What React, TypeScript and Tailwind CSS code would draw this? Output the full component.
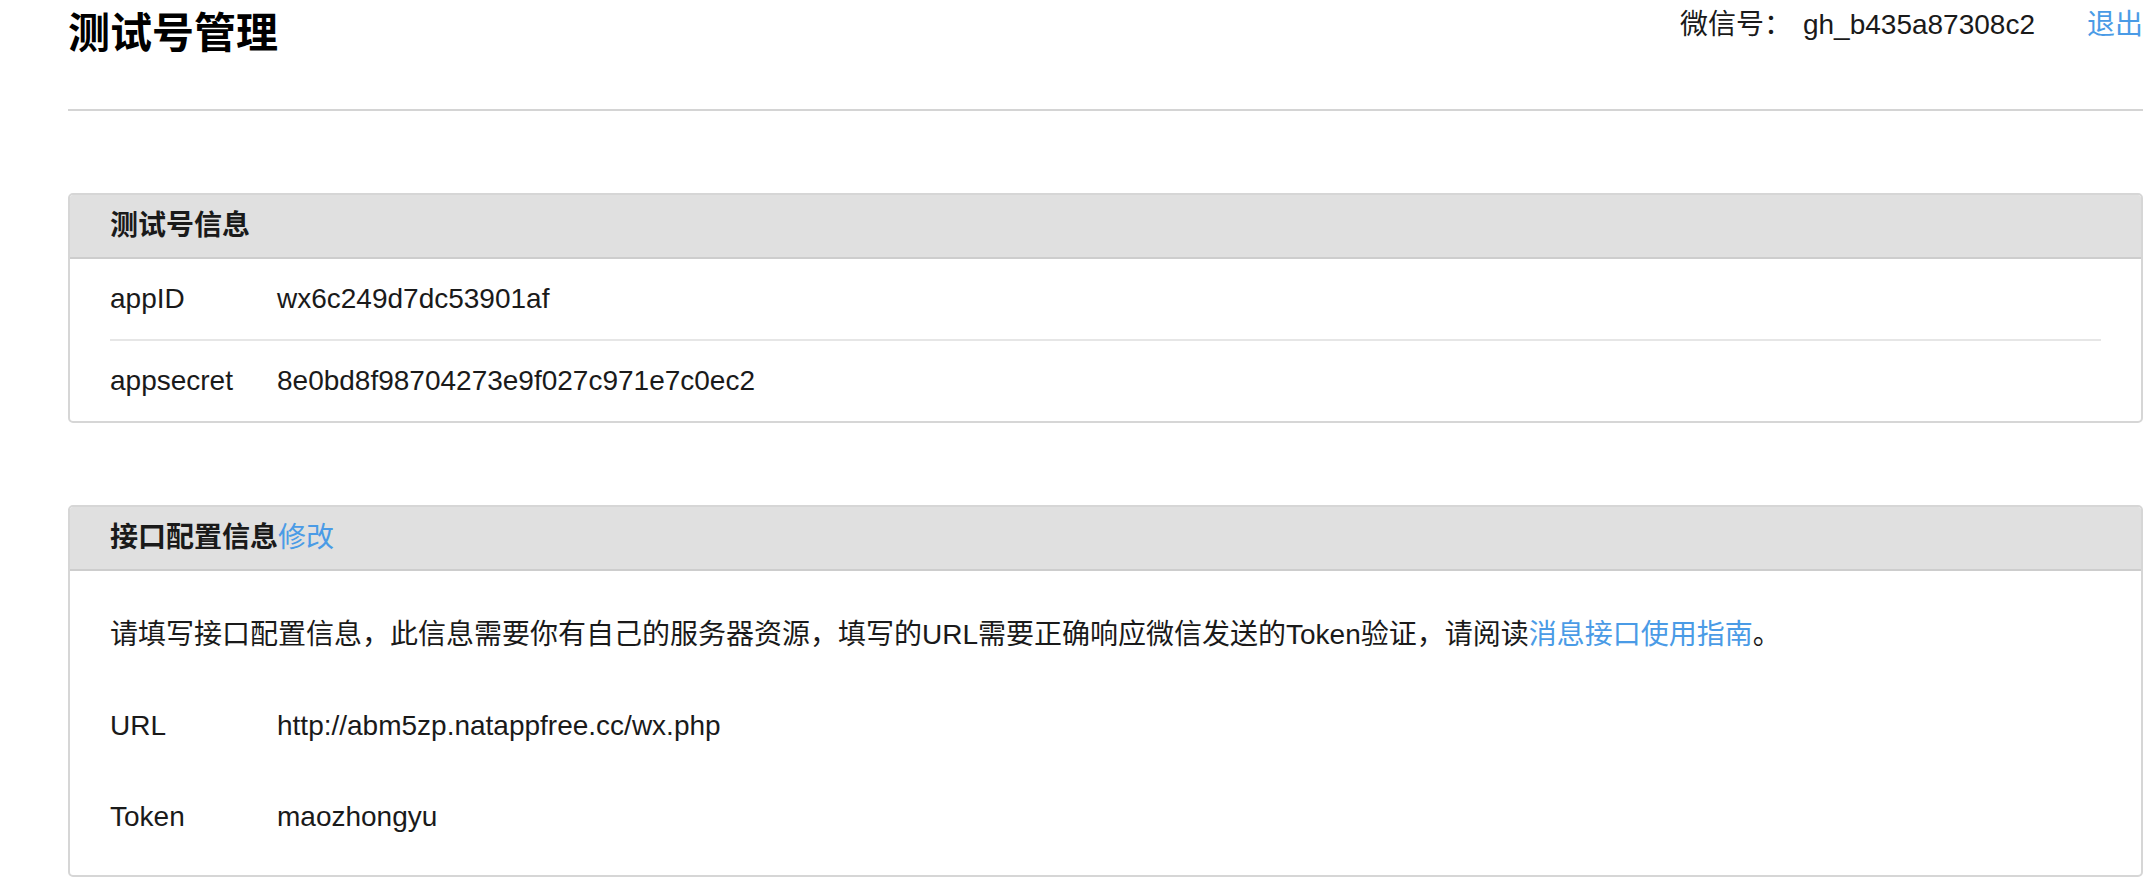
const FONT = "font-['Liberation_Sans','Noto_Sans_CJK_SC',sans-serif]";

function InfoRow({ label, value, last }: { label: string; value: string; last?: boolean }) {
  return (
    <div className={`mx-[40px] flex items-center ${last ? "h-[80px]" : "h-[82px] border-b-2 border-[#e6e6e6]"}`}>
      <span className="w-[167px] shrink-0">{label}</span>
      <span>{value}</span>
    </div>
  );
}

function Panel({ title, children }: { title: React.ReactNode; children: React.ReactNode }) {
  return (
    <div className="border-2 border-[#d6d6d6] rounded-[5px] overflow-hidden">
      <div className="h-[64px] bg-[#e0e0e0] border-b-2 border-[#cdcdcd] px-[40px] flex items-center text-[28px] font-bold">
        {title}
      </div>
      {children}
    </div>
  );
}

export default function App() {
  return (
    <div className={`${FONT} bg-white text-[#1a1a1a] text-[28px] w-[2152px] min-h-[880px] pl-[68px] pr-[9px]`}>
      {/* top bar */}
      <div className="flex justify-between items-start h-[111px] border-b-2 border-[#d4d4d4]">
        <h1 className="text-[42px] leading-[42px] font-bold mt-[13px] text-black">测试号管理</h1>
        <div className="flex items-center leading-[28px] mt-[11px]">
          <span>微信号：</span>
          <span className="ml-[11px]">gh_b435a87308c2</span>
          <a className="ml-[52px] text-[#4a9be6]">退出</a>
        </div>
      </div>

      <div className="mt-[82px]">
        <Panel title="测试号信息">
          <InfoRow label="appID" value="wx6c249d7dc53901af" />
          <InfoRow label="appsecret" value="8e0bd8f98704273e9f027c971e7c0ec2" last />
        </Panel>
      </div>

      <div className="mt-[82px]">
        <Panel
          title={
            <>
              接口配置信息<a className="text-[#4a9be6] font-normal">修改</a>
            </>
          }
        >
          <div className="pt-[18px] pb-[13px]">
            <div className="mx-[40px] h-[91px] flex items-center">
              <p>
                请填写接口配置信息，此信息需要你有自己的服务器资源，填写的URL需要正确响应微信发送的Token验证，请阅读
                <a className="text-[#4a9be6]">消息接口使用指南</a>。
              </p>
            </div>
            <div className="mx-[40px] h-[91px] flex items-center">
              <span className="w-[167px] shrink-0">URL</span>
              <span>http://abm5zp.natappfree.cc/wx.php</span>
            </div>
            <div className="mx-[40px] h-[91px] flex items-center">
              <span className="w-[167px] shrink-0">Token</span>
              <span>maozhongyu</span>
            </div>
          </div>
        </Panel>
      </div>
    </div>
  );
}
